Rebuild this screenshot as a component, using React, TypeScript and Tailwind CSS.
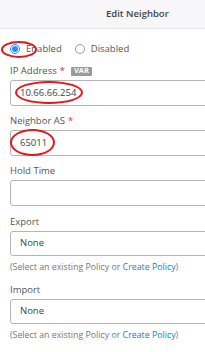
const font = { fontFamily: '"Open Sans", "Liberation Sans", sans-serif' };

function Field({ label, required, badge, value, className, h = 'h-[26px]' }: { label: string; required?: boolean; badge?: string; value?: string; className?: string; h?: string }) {
  return (
    <div className={className}>
      <div className="flex items-center h-[14px] text-[9.5px] text-[#555]">
        <span>{label}</span>
        {required && <span className="text-[#e0245e] ml-[3px]">*</span>}
        {badge && (
          <span className="ml-[6px] bg-[#9a9a9a] text-white text-[7.5px] font-bold leading-none px-[3px] py-[1px] h-[9px] flex items-center rounded-[1px]">{badge}</span>
        )}
      </div>
      <div className={`mt-[2px] ${h} w-[220px] border border-[#b5b5b5] rounded-[3px] flex items-center pl-[9px] text-[9.5px] text-[#444]`}>
        {value}
      </div>
    </div>
  );
}

function Help() {
  return (
    <div className="h-[14px] mt-[5px] flex items-center text-[8.8px] text-[#777] whitespace-nowrap">
      (Select an existing Policy or&nbsp;<span className="text-[#1f78c1]">Create Policy</span>)
    </div>
  );
}

export default function App() {
  return (
    <div className="relative w-[205px] h-[352px] overflow-hidden bg-white" style={font}>
      {/* Header */}
      <div className="h-[29px] bg-[#f7f7f9] border-b border-[#e3e3e3] flex items-center pl-[106px]">
        <span className="text-[9.5px] font-semibold text-[#444]">Edit Neighbor</span>
      </div>

      <div className="pl-[10px]">
        {/* Radios */}
        <div className="mt-[13px] h-[14px] flex items-center text-[9.5px] text-[#555]">
          <span className="w-[10px] h-[10px] rounded-full border border-[#1e90ff] flex items-center justify-center">
            <span className="w-[6px] h-[6px] rounded-full bg-[#1e90ff]" />
          </span>
          <span className="ml-[6px]">Enabled</span>
          <span className="ml-[13px] w-[10px] h-[10px] rounded-full border border-[#9a9a9a]" />
          <span className="ml-[6px]">Disabled</span>
        </div>

        <Field className="mt-[8px]" label="IP Address" required badge="VAR" value="10.66.66.254" />
        <Field className="mt-[8px]" label="Neighbor AS" required value="65011" />
        <Field className="mt-[8px]" label="Hold Time" />
        <Field className="mt-[9px]" label="Export" value="None" h="h-[25px]" />
        <Help />
        <Field className="mt-[8px]" label="Import" value="None" h="h-[25px]" />
        <Help />
      </div>

      {/* Red annotation ellipses */}
      <div className="absolute left-[1px] top-[41px] w-[36px] h-[17px] rounded-[50%] border-2 border-[#e8161b]" />
      <div className="absolute left-[15px] top-[81px] w-[68px] h-[23px] rounded-[50%] border-2 border-[#e8161b]" />
      <div className="absolute left-[10px] top-[129px] w-[45px] h-[27px] rounded-[50%] border-2 border-[#e8161b]" />
    </div>
  );
}
